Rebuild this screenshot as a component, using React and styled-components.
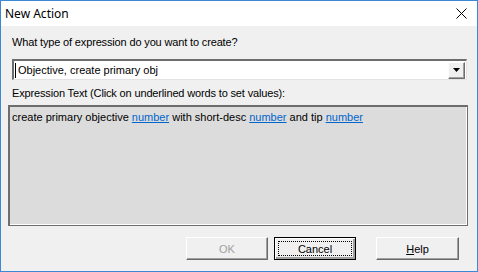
import React from 'react';
import styled, { createGlobalStyle } from 'styled-components';

const GlobalStyle = createGlobalStyle`
    html, body {
        margin: 0;
        padding: 0;
        background: #ffffff;
    }
    * {
        box-sizing: border-box;
    }
`;

const Window = styled.div`
    width: 478px;
    height: 272px;
    border: 1px solid #3c88d4;
    display: flex;
    flex-direction: column;
    background: #f0f0f0;
    font-family: "Liberation Sans", Arial, sans-serif;
    font-size: 11px;
    color: #000000;
`;

const TitleBar = styled.div`
    height: 25px;
    background: #ffffff;
    display: flex;
    align-items: center;
    justify-content: space-between;
    padding-left: 4px;
    padding-right: 10px;
`;

const Title = styled.span`
    font-family: "Noto Sans", "Open Sans", sans-serif;
    font-size: 12px;
    color: #000000;
`;

const Body = styled.div`
    flex: 1;
    display: flex;
    flex-direction: column;
    padding: 10px 9px 0 7px;
`;

const Label = styled.div`
    height: 13px;
    line-height: 13px;
    margin-left: 4px;
    margin-top: ${(props) => props.top || 0}px;
    letter-spacing: -0.15px;
    white-space: nowrap;
`;

const Combo = styled.div`
    margin: 10px 0 0 4px;
    width: 455px;
    height: 21px;
    background: #ffffff;
    border-top: 2px solid #6d6d6d;
    border-left: 2px solid #6d6d6d;
    border-right: 1px solid #e3e3e3;
    border-bottom: 1px solid #e3e3e3;
    display: flex;
    align-items: center;
    justify-content: space-between;
    padding-left: 1px;
    padding-right: 1px;
`;

const ComboText = styled.span`
    border-left: 1px solid #000000;
    padding-left: 2px;
    height: 15px;
    line-height: 15px;
`;

const DropButton = styled.div`
    width: 17px;
    height: 17px;
    background: #f0f0f0;
    border-top: 1px solid #ffffff;
    border-left: 1px solid #ffffff;
    border-right: 1px solid #6d6d6d;
    border-bottom: 1px solid #6d6d6d;
    box-shadow: inset -1px -1px 0 #a0a0a0;
    display: flex;
    align-items: center;
    justify-content: center;
`;

const ExpressionBox = styled.div`
    margin-top: 5px;
    width: 460px;
    height: 121px;
    background: #dcdcdc;
    border-top: 2px solid #6d6d6d;
    border-left: 2px solid #6d6d6d;
    border-right: 1px solid #6d6d6d;
    border-bottom: 1px solid #6d6d6d;
    box-shadow: inset -1px -1px 0 #ffffff;
    padding: 4px 2px;
    line-height: 13px;
    white-space: nowrap;
`;

const Link = styled.span`
    color: #0066cc;
    text-decoration: underline;
`;

const ButtonRow = styled.div`
    margin-top: 11px;
    display: flex;
    padding-left: 178px;
`;

const Button = styled.div`
    width: ${(props) => props.w || 82}px;
    height: 23px;
    margin-right: ${(props) => props.gap || 0}px;
    background: #f0f0f0;
    border-top: 1px solid #ffffff;
    border-left: 1px solid #ffffff;
    border-right: 1px solid #696969;
    border-bottom: 1px solid #696969;
    box-shadow: inset -1px -1px 0 #a0a0a0;
    display: flex;
    align-items: center;
    justify-content: center;
    color: ${(props) => (props.disabled ? '#a0a0a0' : '#000000')};
`;

const DefaultButton = styled(Button)`
    border: 1px solid #000000;
    box-shadow: inset 1px 1px 0 #ffffff, inset -2px -2px 0 #a0a0a0;
    padding: 3px;
`;

const FocusRect = styled.div`
    width: 100%;
    height: 100%;
    border: 1px dotted #000000;
    display: flex;
    align-items: center;
    justify-content: center;
`;

const CloseIcon = () => (
    <svg width="11" height="11" viewBox="0 0 11 11">
        <path d="M0.5 0.5 L10.5 10.5 M10.5 0.5 L0.5 10.5" stroke="#000" strokeWidth="1" />
    </svg>
);

const Arrow = () => (
    <svg width="7" height="4" viewBox="0 0 7 4">
        <path d="M0 0 H7 L3.5 4 Z" fill="#000" />
    </svg>
);

export default function App() {
    return (
        <>
            <GlobalStyle />
            <Window>
                <TitleBar>
                    <Title>New Action</Title>
                    <CloseIcon />
                </TitleBar>
                <Body>
                    <Label>What type of expression do you want to create?</Label>
                    <Combo>
                        <ComboText>Objective, create primary obj</ComboText>
                        <DropButton>
                            <Arrow />
                        </DropButton>
                    </Combo>
                    <Label top={7}>Expression Text (Click on underlined words to set values):</Label>
                    <ExpressionBox>
                        create primary objective <Link>number</Link> with short-desc <Link>number</Link> and tip <Link>number</Link>
                    </ExpressionBox>
                    <ButtonRow>
                        <Button disabled gap={6}>OK</Button>
                        <DefaultButton gap={20}>
                            <FocusRect>Cancel</FocusRect>
                        </DefaultButton>
                        <Button w={83}>
                            <span><u>H</u>elp</span>
                        </Button>
                    </ButtonRow>
                </Body>
            </Window>
        </>
    );
}
